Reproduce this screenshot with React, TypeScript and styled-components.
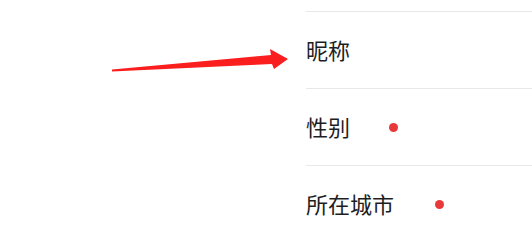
import React from "react";
import styled, { createGlobalStyle } from "styled-components";

const Global = createGlobalStyle`
  html, body { margin: 0; padding: 0; background: #fff; }
  body { font-family: "Noto Sans CJK SC", "Noto Sans", sans-serif; }
`;

const Page = styled.div`
  position: relative;
  width: 532px;
  height: 236px;
  overflow: hidden;
  background: #fff;
  padding: 11px 0 0 306px;
  box-sizing: border-box;
`;

const List = styled.div`
  display: flex;
  flex-direction: column;
`;

const Row = styled.div`
  display: flex;
  align-items: center;
  height: 76px;
  box-sizing: content-box;
  border-top: 1px solid #e8e8e8;
`;

const Label = styled.span`
  font-size: 22px;
  line-height: 26px;
  padding-bottom: 3px;
  color: #1e1e1e;
  font-weight: 400;
`;

const Dot = styled.span<{ $gap: number }>`
  width: 9px;
  height: 9px;
  border-radius: 50%;
  background: #e8383a;
  margin-left: ${(p) => p.$gap}px;
`;

const Arrow = styled.svg`
  position: absolute;
  left: 0;
  top: 0;
  pointer-events: none;
`;

const rows: { label: string; gap?: number }[] = [
  { label: "昵称" },
  { label: "性别", gap: 39 },
  { label: "所在城市", gap: 41 },
];

export default function App() {
  return (
    <>
      <Global />
      <Page>
        <List>
          {rows.map((r) => (
            <Row key={r.label}>
              <Label>{r.label}</Label>
              {r.gap !== undefined && <Dot $gap={r.gap} />}
            </Row>
          ))}
        </List>
        <Arrow width="532" height="236" viewBox="0 0 532 236">
          <polygon
            points="112,69.5 271,55 270,49 288,59 274,69 272,64 112,71.5"
            fill="#fb1e1e"
          />
        </Arrow>
      </Page>
    </>
  );
}
